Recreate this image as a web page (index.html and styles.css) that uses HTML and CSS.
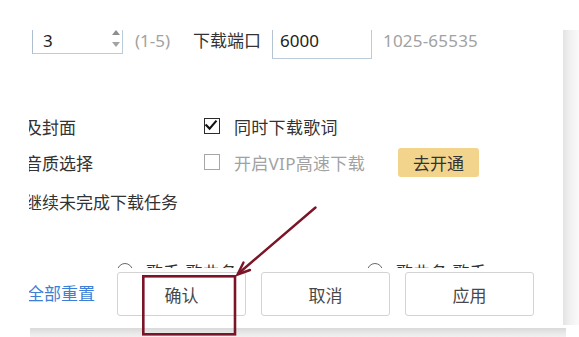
FILE: index.html
```html
<!DOCTYPE html>
<html lang="zh-CN">
<head>
<meta charset="utf-8">
<title>下载设置</title>
<link rel="stylesheet" href="styles.css">
</head>
<body>
<div class="stage">
  <div class="panel">
    <div class="clip">
      <div class="scroll">
        <div class="row-top">
          <div class="spin">
            <span class="spin-val">3</span>
            <span class="spin-arrows"><i class="arr-up"></i><i class="arr-down"></i></span>
          </div>
          <span class="hint hint-range">(1-5)</span>
          <span class="field-label">下载端口</span>
          <div class="port">6000</div>
          <span class="hint hint-port">1025-65535</span>
        </div>
        <div class="opt-row row-a">
          <span class="label">及封面</span>
          <span class="cb cb-on"><svg viewBox="0 0 16 16" width="16" height="16"><path d="M3.3 8.2 L6.6 11.6 L12.8 4.4" fill="none" stroke="#111" stroke-width="2.1" stroke-linecap="square"/></svg></span>
          <span class="cb-text">同时下载歌词</span>
        </div>
        <div class="opt-row">
          <span class="label">音质选择</span>
          <span class="cb cb-off"></span>
          <span class="cb-text muted">开启VIP高速下载</span>
          <span class="vip-btn">去开通</span>
        </div>
        <div class="opt-row row-c">
          <span class="label">继续未完成下载任务</span>
        </div>
        <div class="radio-row">
          <span class="radio-item first"><span class="radio"></span><span class="radio-text">歌手-歌曲名</span></span>
          <span class="radio-item"><span class="radio"></span><span class="radio-text">歌曲名-歌手</span></span>
        </div>
      </div>
      <div class="footer">
        <span class="reset">全部重置</span>
        <span class="btn">确认</span>
        <span class="btn">取消</span>
        <span class="btn">应用</span>
      </div>
    </div>
  </div>
  <div class="shadow-right"></div>
  <div class="shadow-bottom"></div>
  <svg class="annot" viewBox="0 0 579 337" width="579" height="337">
    <rect x="143.3" y="276.3" width="91.7" height="58" fill="none" stroke="#7b1426" stroke-width="2.6"/>
    <line x1="315.5" y1="207.5" x2="239" y2="273" stroke="#7b1426" stroke-width="2.4" stroke-linecap="round"/>
    <polyline points="243.5,262.5 237.5,274.5 250,270" fill="none" stroke="#7b1426" stroke-width="2.4" stroke-linejoin="miter" stroke-linecap="round"/>
  </svg>
</div>
</body>
</html>
```

FILE: styles.css
```css
html, body {
  margin: 0;
  padding: 0;
  background: #ffffff;
}

body {
  width: 579px;
  height: 337px;
  overflow: hidden;
  font-family: "Noto Sans", "Noto Sans CJK SC", sans-serif;
  font-size: 17px;
  color: #333333;
}

.stage {
  position: relative;
  display: grid;
  grid-template-columns: 563px 16px;
  grid-template-rows: 328px 9px;
  width: 579px;
  height: 337px;
}

.panel {
  grid-column: 1;
  grid-row: 1;
  background: #ffffff;
  box-sizing: border-box;
  padding-top: 30px;
  padding-left: 29px;
}

.clip {
  overflow: hidden;
  height: 298px;
}

.scroll {
  height: 238px;
  overflow: hidden;
  margin-left: -4px;
}

/* top row with inputs */
.row-top {
  display: flex;
  align-items: flex-start;
  margin-top: -2px;
  white-space: nowrap;
}

.spin {
  display: flex;
  align-items: center;
  box-sizing: border-box;
  margin-left: 7px;
  width: 91px;
  height: 26px;
  border: 1px solid #bccbda;
  border-left-color: #aebfd1;
  padding-left: 10px;
  color: #222222;
  line-height: 24px;
}

.spin-arrows {
  display: flex;
  flex-direction: column;
  align-self: flex-start;
  margin-left: auto;
  margin-right: 2px;
  margin-top: 1px;
  gap: 7px;
}

.arr-up,
.arr-down {
  display: block;
  width: 0;
  height: 0;
  border-left: 4.5px solid transparent;
  border-right: 4.5px solid transparent;
}

.arr-up {
  border-bottom: 5px solid #8e8e8e;
}

.arr-down {
  border-top: 5px solid #a3a3a3;
}

.hint {
  color: #a2a2a2;
  line-height: 26px;
}

.hint-range {
  width: 58px;
  margin-left: 12px;
}

.field-label {
  width: 79px;
  line-height: 26px;
  color: #333333;
}

.port {
  box-sizing: border-box;
  width: 100px;
  height: 31px;
  border: 1px solid #bccbda;
  border-left-color: #b3c3d4;
  padding-left: 7px;
  line-height: 24px;
  color: #222222;
}

.hint-port {
  margin-left: 11px;
  letter-spacing: 0.2px;
}

/* option rows */
.opt-row {
  display: flex;
  align-items: center;
  height: 36px;
  white-space: nowrap;
}

.row-a {
  margin-top: 49px;
}

.row-c {
  margin-top: 3px;
}

.label {
  width: 179px;
  color: #333333;
}

.cb {
  box-sizing: border-box;
  width: 16px;
  height: 16px;
  margin-right: 14px;
  flex: none;
  display: flex;
}

.cb-on {
  border: 1.6px solid #2b2b2b;
}

.cb-on svg {
  margin: -1.6px;
}

.cb-off {
  border: 1px solid #a6a6a6;
}

.cb-text {
  color: #333333;
  letter-spacing: 0.3px;
}

.cb-text.muted {
  color: #a2a2a2;
  width: 164px;
}

.vip-btn {
  width: 81px;
  height: 29px;
  border-radius: 3px;
  background: #f3d48c;
  color: #333333;
  display: flex;
  align-items: center;
  justify-content: center;
}

/* clipped radio row */
.radio-row {
  display: flex;
  align-items: flex-start;
  margin-top: 44px;
  white-space: nowrap;
}

.radio-item {
  display: flex;
  align-items: flex-start;
}

.radio-item.first {
  margin-left: 92px;
  width: 250px;
}

.radio {
  box-sizing: border-box;
  width: 16px;
  height: 16px;
  border: 1.2px solid #6a6a6a;
  border-radius: 50%;
  flex: none;
}

.radio-text {
  margin-left: 13px;
  line-height: 20px;
  color: #333333;
}

/* footer */
.footer {
  display: flex;
  align-items: flex-start;
  height: 60px;
  box-sizing: border-box;
  padding-top: 4px;
  margin-left: -4px;
  white-space: nowrap;
}

.reset {
  margin-left: 2px;
  width: 90px;
  line-height: 44px;
  color: #3d7fd6;
}

.btn {
  box-sizing: border-box;
  width: 129px;
  height: 44px;
  margin-right: 15px;
  border: 1px solid #d3d3d3;
  border-radius: 3px;
  background: #ffffff;
  color: #484848;
  display: flex;
  align-items: center;
  justify-content: center;
}

/* window shadow strips */
.shadow-right {
  grid-column: 2;
  grid-row: 1;
  margin-top: 30px;
  height: 295px;
  background: linear-gradient(to right, #e3e3e3, #f1f1f1 45%, #fafafa);
}

.shadow-bottom {
  grid-column: 1 / 3;
  grid-row: 2;
  margin-left: 30px;
  width: 536px;
  background: linear-gradient(to bottom, #d9d9d9, #e9e9e9 60%, #f1f1f1);
}

/* annotation overlay */
.annot {
  position: absolute;
  left: 0;
  top: 0;
  pointer-events: none;
}
```
